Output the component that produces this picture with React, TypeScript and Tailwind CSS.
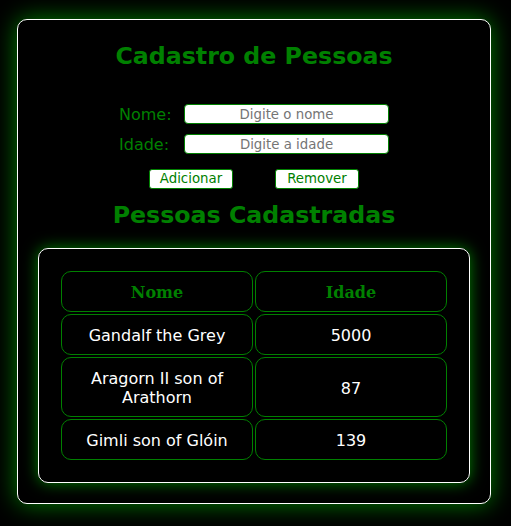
const pessoas = [
  { nome: "Gandalf the Grey", idade: 5000 },
  { nome: "Aragorn II son of Arathorn", idade: 87 },
  { nome: "Gimli son of Glóin", idade: 139 },
];

const App = () => {
  return (
    <div className="min-h-screen bg-black pt-[19px] pl-[17px] font-['DejaVu_Sans',sans-serif]">
      <div className="w-[474px] rounded-[10px] border border-white bg-black px-[20px] pt-[22px] pb-[20px] shadow-[0_0_25px_#008000]">
        <h1 className="text-center text-[23.7px] leading-[28px] font-bold text-[#008000]">
          Cadastro de Pessoas
        </h1>

        {/* Formulário */}
        <div className="mt-[34px] flex flex-col items-center gap-[10px]">
          <div className="flex items-center gap-[12px]">
            <label className="w-[53px] text-[16px] leading-[19px] text-[#008000]">Nome:</label>
            <input
              className="h-[20px] w-[205px] rounded-[4px] border border-[#008000] bg-white text-center text-[13.33px] placeholder:text-[#757575]"
              placeholder="Digite o nome"
            />
          </div>
          <div className="flex items-center gap-[12px]">
            <label className="w-[53px] text-[16px] leading-[19px] text-[#008000]">Idade:</label>
            <input
              className="h-[20px] w-[205px] rounded-[4px] border border-[#008000] bg-white text-center text-[13.33px] placeholder:text-[#757575]"
              placeholder="Digite a idade"
            />
          </div>
        </div>

        <div className="mt-[15px] flex justify-center gap-[42px]">
          <button className="h-[20px] w-[84px] rounded-[3px] border border-[#008000] bg-white text-[13.33px] leading-[18px] text-[#008000]">
            Adicionar
          </button>
          <button className="h-[20px] w-[84px] rounded-[3px] border border-[#008000] bg-white text-[13.33px] leading-[18px] text-[#008000]">
            Remover
          </button>
        </div>

        <h2 className="mt-[12px] text-center text-[23.7px] leading-[28px] font-bold text-[#008000]">
          Pessoas Cadastradas
        </h2>

        {/* Tabela */}
        <div className="mt-[19px] rounded-[10px] border border-white p-[20px] shadow-[0_0_15px_#008000]">
          <table className="w-full table-fixed border-separate border-spacing-[2px] text-center">
            <thead>
              <tr>
                <th className="rounded-[10px] border border-[#008000] pt-[11px] pb-[9px] font-['DejaVu_Serif',serif] text-[16px] leading-[19px] font-bold text-[#008000]">
                  Nome
                </th>
                <th className="rounded-[10px] border border-[#008000] pt-[11px] pb-[9px] font-['DejaVu_Serif',serif] text-[16px] leading-[19px] font-bold text-[#008000]">
                  Idade
                </th>
              </tr>
            </thead>
            <tbody>
              {pessoas.map((p) => (
                <tr key={p.nome}>
                  <td className="rounded-[10px] border border-[#008000] px-[10px] pt-[11px] pb-[9px] text-[16px] leading-[19px] text-white">
                    {p.nome}
                  </td>
                  <td className="rounded-[10px] border border-[#008000] px-[10px] pt-[11px] pb-[9px] text-[16px] leading-[19px] text-white">
                    {p.idade}
                  </td>
                </tr>
              ))}
            </tbody>
          </table>
        </div>
      </div>
    </div>
  );
};

export default App;
